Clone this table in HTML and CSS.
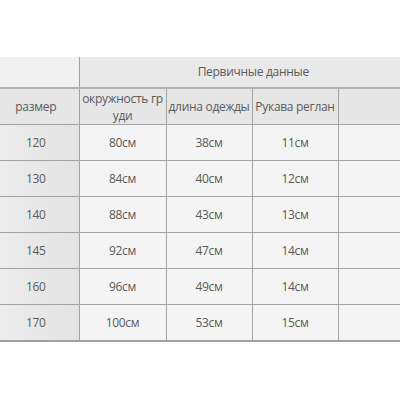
FILE: index.html
```html
<!DOCTYPE html>
<html lang="ru">
<head>
<meta charset="utf-8">
<link rel="stylesheet" href="styles.css">
</head>
<body>
<div class="wrap">
<table class="sizes">
  <colgroup>
    <col class="c1"><col class="c2"><col class="c3"><col class="c4"><col class="c5">
  </colgroup>
  <tr class="top">
    <td class="corner"></td>
    <td class="title" colspan="4">Первичные данные</td>
  </tr>
  <tr class="head">
    <td class="first">размер</td>
    <td>окружность гр<br>уди</td>
    <td>длина одежды</td>
    <td>Рукава реглан</td>
    <td></td>
  </tr>
  <tr><td class="first">120</td><td>80см</td><td>38см</td><td>11см</td><td></td></tr>
  <tr><td class="first">130</td><td>84см</td><td>40см</td><td>12см</td><td></td></tr>
  <tr><td class="first">140</td><td>88см</td><td>43см</td><td>13см</td><td></td></tr>
  <tr><td class="first">145</td><td>92см</td><td>47см</td><td>14см</td><td></td></tr>
  <tr><td class="first">160</td><td>96см</td><td>49см</td><td>14см</td><td></td></tr>
  <tr class="last"><td class="first">170</td><td>100см</td><td>53см</td><td>15см</td><td></td></tr>
</table>
</div>
</body>
</html>
```

FILE: styles.css
```css
html, body {
  margin: 0;
  padding: 0;
  background: #ffffff;
  overflow: hidden;
}

.wrap {
  padding-top: 57px;
  width: 400px;
}

.sizes {
  table-layout: fixed;
  border-collapse: collapse;
  width: 400px;
  font-family: "Open Sans", "Liberation Sans", sans-serif;
  font-size: 12px;
  letter-spacing: -0.3px;
  color: #5a5a5a;
}

.c1 { width: 79px; }
.c2 { width: 87px; }
.c3 { width: 86px; }
.c4 { width: 86px; }
.c5 { width: 62px; }

.sizes td {
  height: 35px;
  padding: 0;
  text-align: center;
  vertical-align: middle;
  background: #f4f4f4;
  border: 1px solid #a3a3a3;
  line-height: 17px;
}

.sizes tr:first-child td { border-top: none; }
.sizes td:first-child { border-left: none; }
.sizes td:last-child { border-right: none; }

.sizes tr.top td {
  height: 28px;
  background: #e9e9e9;
  border-bottom: 2px solid #b2b2b2;
  padding-bottom: 2px;
}

.sizes tr.top td.title {
  padding-left: 27px;
}

.sizes tr.top td.corner {
  background: #f1f1f1;
}

.sizes tr.head td {
  height: 35px;
  background: #e6e6e6;
  white-space: nowrap;
}

.sizes td.first {
  padding-right: 7px;
  background: linear-gradient(to right, #ececec, #e3e3e3);
}

.sizes tr.last td {
  border-bottom: 2px solid #a0a0a0;
}
```
